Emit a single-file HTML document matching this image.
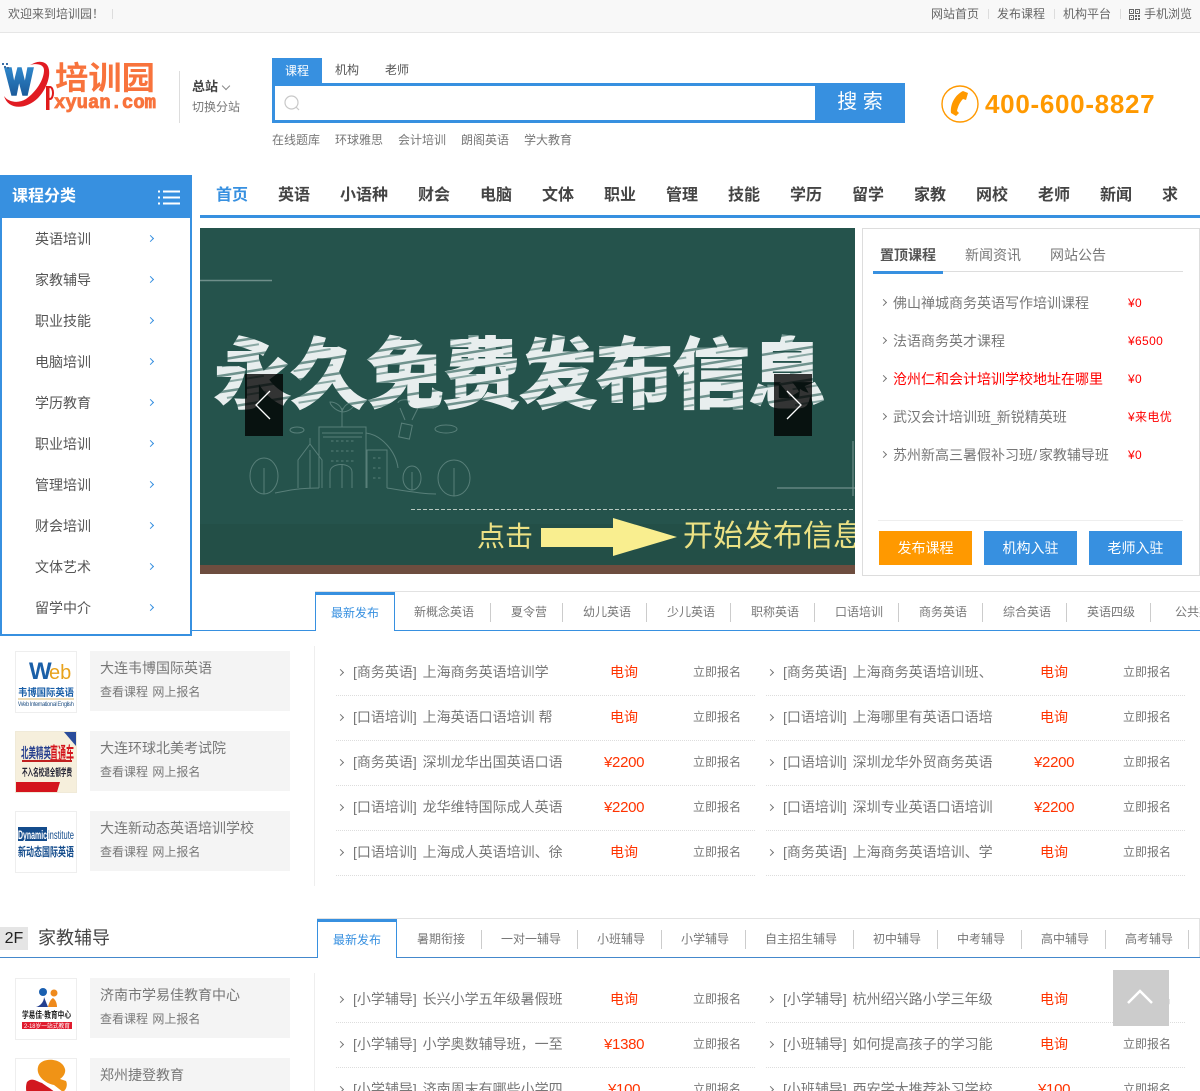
<!DOCTYPE html>
<html lang="zh"><head><meta charset="utf-8"><title>培训园</title>
<style>
*{margin:0;padding:0;box-sizing:border-box}
html,body{width:1200px;height:1091px;overflow:hidden;background:#fff}
body{position:relative;font-family:"Liberation Sans","WenQuanYi Zen Hei","Noto Sans CJK SC",sans-serif;font-size:12px;color:#777}
.a,.t,.s,.c,.b,.ch{position:absolute}
.t{white-space:nowrap;line-height:20px}
.f12{font-size:12px}.f14{font-size:14px}.f13{font-size:13px}
.s{width:1px;height:19px;background:#ccc}
.ch{width:5px;height:5px;border-top:1px solid #777;border-right:1px solid #777;transform:rotate(45deg)}
.sb{border-color:#3790e0;width:5px;height:5px}
.side{font-size:14px;color:#555;left:35px}
.nav{font-size:16px;font-weight:bold;color:#444;top:186px}
.r{font-size:14px;color:#777}
.r i{font-style:normal;margin-left:2px}
.red{color:#f30;font-size:14px}
.pr{color:#f30;font-size:15px;letter-spacing:-.3px;margin-top:1px}
.dot{position:absolute;height:1px;border-top:1px dotted #ddd}
.c{background:#f4f4f4;left:90px;width:200px;height:60px}
.b{left:15px;width:62px;height:62px;border:1px solid #eee;background:#fff;overflow:hidden}
.btn{position:absolute;top:531px;height:34px;width:93px;background:#3790e0;color:#fff;font-size:14px;line-height:34px;text-align:center}
.sp{color:#f00;font-size:12px;letter-spacing:.35px}
.w{word-spacing:1px}
.tc{font-family:"Noto Sans CJK TC",sans-serif}
</style></head><body>

<!-- top bar -->
<div class="a" style="left:0;top:0;width:1200px;height:33px;background:#f8f8f8;border-bottom:1px solid #e6e6e6"></div>
<div class="t" style="left:8px;top:4px;color:#666">欢迎来到培训园<span class="tc">！</span></div>
<div class="a" style="left:112px;top:9px;width:1px;height:10px;background:#ddd"></div>
<div class="t" style="left:931px;top:4px;color:#666">网站首页</div>
<div class="a" style="left:988px;top:9px;width:1px;height:10px;background:#ddd"></div>
<div class="t" style="left:997px;top:4px;color:#666">发布课程</div>
<div class="a" style="left:1054px;top:9px;width:1px;height:10px;background:#ddd"></div>
<div class="t" style="left:1063px;top:4px;color:#666">机构平台</div>
<div class="a" style="left:1120px;top:9px;width:1px;height:10px;background:#ddd"></div>
<svg class="a" style="left:1129px;top:9px" width="11" height="11" viewBox="0 0 11 11"><path d="M.5.5h4v4h-4zM6.500.5h4v4h-4zM.5 6.500h4v4h-4z" fill="none" stroke="#666"/><path d="M6 6h2v2H6zM9 6h2v2H9zM6 9h2v2H6zM9 9h2v2H9zM2 2h1v1H2zM8 2h1v1H8zM2 8h1v1H2z" fill="#666"/></svg>
<div class="t" style="left:1144px;top:4px;color:#666">手机浏览</div>

<!-- logo -->
<svg class="a" style="left:0;top:56px" width="170" height="60" viewBox="0 0 170 60">
<defs><linearGradient id="wg" x1="0" y1="0" x2="0" y2="1"><stop offset="0" stop-color="#2f86c9"/><stop offset="1" stop-color="#1c5c9c"/></linearGradient></defs>
<path d="M5 12L12 39H16L19 24L23 39H27L33 12H28L25 28L21 12H18L14 28L11 12Z" fill="url(#wg)" stroke="url(#wg)" stroke-width="1.500"/>
<path d="M4 40C8 54 26 54 38 42C50 30 54 8 42 6C38 5 34 7 30 9C36 7 44 8 44 14C44 24 36 36 26 43C18 48 8 46 4 40Z" fill="#e11b22"/>
<path d="M2 7h2v2H2zM6 7h2v2H6zM4 10h2v2H4zM7 11h2v2H7z" fill="#3a6ea5"/>
<text x="55" y="33" font-size="32" font-weight="bold" fill="#f8733c" font-family="'WenQuanYi Zen Hei','Noto Sans CJK SC',sans-serif" textLength="100" lengthAdjust="spacingAndGlyphs">培训园</text>
<path d="M46 30h3.500v24H46z" fill="#e01a1a"/>
<ellipse cx="50" cy="37" rx="3" ry="6" fill="none" stroke="#e01a1a" stroke-width="2"/>
<text x="54" y="52" font-size="19" font-weight="bold" fill="#f8733c" stroke="#f8733c" stroke-width=".8" font-family="'Liberation Mono',monospace" textLength="102" lengthAdjust="spacingAndGlyphs">xyuan.com</text>
</svg>
<div class="a" style="left:179px;top:71px;width:1px;height:52px;background:#ddd"></div>
<div class="t f13" style="left:192px;top:77px;color:#444;font-weight:bold">总站</div>
<div class="a" style="left:223px;top:83px;width:6px;height:6px;border-right:1px solid #888;border-bottom:1px solid #888;transform:rotate(45deg)"></div>
<div class="t" style="left:192px;top:97px;color:#777">切换分站</div>

<!-- search -->
<div class="a" style="left:272px;top:58px;width:50px;height:25px;background:#3790e0"></div>
<div class="t" style="left:285px;top:61px;color:#fff">课程</div>
<div class="t" style="left:335px;top:60px;color:#555">机构</div>
<div class="t" style="left:385px;top:60px;color:#555">老师</div>
<div class="a" style="left:272px;top:83px;width:633px;height:40px;border:3px solid #3790e0;background:#fff"></div>
<div class="a" style="left:815px;top:83px;width:90px;height:40px;background:#3790e0;color:#fff;font-size:20px;line-height:39px;text-align:center">搜 索</div>
<svg class="a" style="left:284px;top:95px" width="17" height="17" viewBox="0 0 17 17"><circle cx="7.5" cy="7.5" r="6.5" fill="none" stroke="#c8c8c8" stroke-width="1.2"/><path d="M12 12l3 3" stroke="#c8c8c8" stroke-width="1.2"/></svg>
<div class="t" style="left:272px;top:130px">在线题库</div>
<div class="t" style="left:335px;top:130px">环球雅思</div>
<div class="t" style="left:398px;top:130px">会计培训</div>
<div class="t" style="left:461px;top:130px">朗阁英语</div>
<div class="t" style="left:524px;top:130px">学大教育</div>

<!-- phone -->
<svg class="a" style="left:940px;top:84px" width="40" height="40" viewBox="0 0 40 40"><circle cx="20" cy="20" r="18" fill="none" stroke="#f90" stroke-width="1.400"/><path d="M23 7L28 9L26 16L23 15C20 18 18 22 17 27L19 29L16 32L11 29C10 20 15 11 23 7Z" fill="#f90"/></svg>
<div class="t" style="left:985px;top:89px;font-size:26px;line-height:30px;font-weight:bold;color:#f90;letter-spacing:.7px">400-600-8827</div>

<!-- nav -->
<div class="t nav" style="left:216px;color:#3790e0">首页</div>
<div class="t nav" style="left:278px">英语</div>
<div class="t nav" style="left:340px">小语种</div>
<div class="t nav" style="left:418px">财会</div>
<div class="t nav" style="left:480px">电脑</div>
<div class="t nav" style="left:542px">文体</div>
<div class="t nav" style="left:604px">职业</div>
<div class="t nav" style="left:666px">管理</div>
<div class="t nav" style="left:728px">技能</div>
<div class="t nav" style="left:790px">学历</div>
<div class="t nav" style="left:852px">留学</div>
<div class="t nav" style="left:914px">家教</div>
<div class="t nav" style="left:976px">网校</div>
<div class="t nav" style="left:1038px">老师</div>
<div class="t nav" style="left:1100px">新闻</div>
<div class="t nav" style="left:1162px">求</div>
<div class="a" style="left:200px;top:215px;width:1000px;height:3px;background:#3790e0"></div>

<!-- sidebar -->
<div class="a" style="left:0;top:175px;width:192px;height:461px;border:2px solid #3790e0;background:#fff"></div>
<div class="a" style="left:0;top:175px;width:192px;height:43px;background:#3790e0"></div>
<div class="t" style="left:12px;top:187px;font-size:16px;font-weight:bold;color:#fff">课程分类</div>
<svg class="a" style="left:158px;top:190px" width="22" height="15"><path d="M0 1.500h2M5 1.500h17M0 7.500h2M5 7.500h17M0 13.500h2M5 13.500h17" stroke="#fff" stroke-width="2"/></svg>
<div class="t side" style="top:229px">英语培训</div><div class="ch sb" style="left:148px;top:236px"></div>
<div class="t side" style="top:270px">家教辅导</div><div class="ch sb" style="left:148px;top:277px"></div>
<div class="t side" style="top:311px">职业技能</div><div class="ch sb" style="left:148px;top:318px"></div>
<div class="t side" style="top:352px">电脑培训</div><div class="ch sb" style="left:148px;top:359px"></div>
<div class="t side" style="top:393px">学历教育</div><div class="ch sb" style="left:148px;top:400px"></div>
<div class="t side" style="top:434px">职业培训</div><div class="ch sb" style="left:148px;top:441px"></div>
<div class="t side" style="top:475px">管理培训</div><div class="ch sb" style="left:148px;top:482px"></div>
<div class="t side" style="top:516px">财会培训</div><div class="ch sb" style="left:148px;top:523px"></div>
<div class="t side" style="top:557px">文体艺术</div><div class="ch sb" style="left:148px;top:564px"></div>
<div class="t side" style="top:598px">留学中介</div><div class="ch sb" style="left:148px;top:605px"></div>

<!-- banner -->
<svg class="a" style="left:200px;top:228px" width="655" height="346" viewBox="0 0 655 346">
<defs><pattern id="st" width="70" height="16" patternUnits="userSpaceOnUse" patternTransform="rotate(-9)"><rect width="70" height="16" fill="#e8eeee"/><rect y="4" width="70" height="2.500" fill="#6f928d"/><rect y="11" width="40" height="2" fill="#8aa8a4"/></pattern></defs>
<rect width="655" height="346" fill="#25534c"/>
<rect y="296" width="655" height="41" fill="#234f47"/>
<rect y="337" width="655" height="9" fill="#6d4d3f"/>
<path d="M0 52.500H72" stroke="#6f8f8a" stroke-width="1.500"/>
<path d="M577 260H657M653 213V268" stroke="#6f8f8a" stroke-width="1.200"/>
<g fill="none" stroke="#587f79" stroke-width="1">
<path d="M119 260V199H166V260M122 205H163M123 209H162"/>
<path d="M167 260V222H187V260M166 205C182 207 196 224 198 240"/>
<path d="M110 260V222M98 260V232L110 216L122 232V260M110 216V210"/>
<path d="M130 260V244C130 234 152 234 152 244V260M142 236V260"/>
<path d="M142 199V180M142 184C134 182 130 176 130 174C136 174 142 178 142 184C144 176 150 174 156 174C154 180 148 184 142 184"/>
<ellipse cx="64" cy="248" rx="14" ry="18"/><ellipse cx="254" cy="250" rx="16" ry="18"/><ellipse cx="212" cy="250" rx="9" ry="12"/>
<path d="M64 266V240M254 268V240M212 262V244M75 265C90 262 100 260 119 260M187 260C200 262 220 266 236 266"/>
<ellipse cx="97" cy="202" rx="7" ry="3"/><ellipse cx="246" cy="201" rx="11" ry="4"/>
<path d="M198 175C198 170 218 170 218 180L212 192M200 180L205 192"/><rect x="200" y="196" width="11" height="14" transform="rotate(12 205 203)"/>
</g>
<g fill="none" stroke="#587f79" stroke-width="1" stroke-dasharray="2.500 2.500">
<path d="M131 213H155M131 223H155M131 233H155M173 230H182M173 240H182M173 250H182"/>
</g>
<text x="14" y="174" font-size="77" font-weight="bold" fill="url(#st)" stroke="url(#st)" stroke-width="2" font-family="'Noto Sans CJK SC','WenQuanYi Zen Hei',sans-serif" textLength="612" lengthAdjust="spacing">永久免费发布信息</text>
<path d="M211 281.500H655" stroke="#b8c8c0" stroke-dasharray="4 2"/>
<text x="277" y="318" font-size="28" fill="#ece184" font-family="'WenQuanYi Zen Hei','Noto Sans CJK SC',sans-serif">点击</text>
<path d="M341 300H413V290L477 309L413 328V319H341Z" fill="#f9ee8f"/>
<text x="483" y="318" font-size="30" fill="#ece184" font-family="'WenQuanYi Zen Hei','Noto Sans CJK SC',sans-serif">开始发布信息</text>
<rect x="45" y="146" width="38" height="62" fill="#000" opacity=".78"/>
<rect x="574" y="146" width="38" height="62" fill="#000" opacity=".78"/>
<path d="M70 163L56 177L70 191M587 163L601 177L587 191" fill="none" stroke="#fff" stroke-width="1.300"/>
</svg>

<!-- right panel -->
<div class="a" style="left:862px;top:228px;width:338px;height:348px;border:1px solid #ddd;background:#fff"></div>
<div class="t f14" style="left:880px;top:245px;color:#555;font-weight:bold">置顶课程</div>
<div class="t f14" style="left:965px;top:245px;color:#777">新闻资讯</div>
<div class="t f14" style="left:1050px;top:245px;color:#777">网站公告</div>
<div class="a" style="left:873px;top:271px;width:310px;height:1px;background:#ddd"></div>
<div class="a" style="left:873px;top:271px;width:70px;height:3px;background:#3790e0"></div>
<div class="ch" style="left:881px;top:300px"></div><div class="t r" style="left:893px;top:293px">佛山禅城商务英语写作培训课程</div><div class="t sp" style="left:1128px;top:293px">¥0</div>
<div class="ch" style="left:881px;top:338px"></div><div class="t r" style="left:893px;top:331px">法语商务英才课程</div><div class="t sp" style="left:1128px;top:331px">¥6500</div>
<div class="ch" style="left:881px;top:376px"></div><div class="t r" style="left:893px;top:369px;color:#f00">沧州仁和会计培训学校地址在哪里</div><div class="t sp" style="left:1128px;top:369px">¥0</div>
<div class="ch" style="left:881px;top:414px"></div><div class="t r" style="left:893px;top:407px">武汉会计培训班<span style="letter-spacing:-2px">_</span>新锐精英班</div><div class="t sp" style="left:1128px;top:407px">¥来电优</div>
<div class="ch" style="left:881px;top:452px"></div><div class="t r" style="left:893px;top:445px">苏州新高三暑假补习班/<i></i>家教辅导班</div><div class="t sp" style="left:1128px;top:445px">¥0</div>
<div class="a" style="left:878px;top:520px;width:305px;height:1px;background:#eee"></div>
<div class="btn" style="left:879px;background:#f90">发布课程</div>
<div class="btn" style="left:984px">机构入驻</div>
<div class="btn" style="left:1089px">老师入驻</div>

<!-- floor 1 tabs -->
<div class="a" style="left:315px;top:591px;width:885px;height:1px;background:#e2e2e2"></div>
<div class="a" style="left:192px;top:630px;width:1008px;height:1px;background:#3790e0"></div>
<div class="a" style="left:315px;top:592px;width:80px;height:39px;border:1px solid #3790e0;border-top:3px solid #3790e0;border-bottom:0;background:#fff"></div>
<div class="t" style="left:331px;top:603px;color:#3790e0">最新发布</div>
<div class="t" style="left:414px;top:602px">新概念英语</div><div class="s" style="left:490px;top:603px"></div>
<div class="t" style="left:511px;top:602px">夏令营</div><div class="s" style="left:562px;top:603px"></div>
<div class="t" style="left:583px;top:602px">幼儿英语</div><div class="s" style="left:646px;top:603px"></div>
<div class="t" style="left:667px;top:602px">少儿英语</div><div class="s" style="left:730px;top:603px"></div>
<div class="t" style="left:751px;top:602px">职称英语</div><div class="s" style="left:814px;top:603px"></div>
<div class="t" style="left:835px;top:602px">口语培训</div><div class="s" style="left:898px;top:603px"></div>
<div class="t" style="left:919px;top:602px">商务英语</div><div class="s" style="left:982px;top:603px"></div>
<div class="t" style="left:1003px;top:602px">综合英语</div><div class="s" style="left:1066px;top:603px"></div>
<div class="t" style="left:1087px;top:602px">英语四级</div><div class="s" style="left:1150px;top:603px"></div>
<div class="t" style="left:1175px;top:602px">公共英语</div>

<!-- floor 1 left -->
<div class="b" style="top:651px"><svg width="60" height="60" viewBox="0 0 60 60"><text x="13" y="27" font-size="24" font-weight="bold" fill="#1a5fa8" font-family="'Liberation Sans',sans-serif">W</text><text x="33" y="27" font-size="20" fill="#e8a21c" font-family="'Liberation Sans',sans-serif">eb</text><text x="2" y="44" font-size="10" font-weight="bold" fill="#1a5fa8" textLength="56" lengthAdjust="spacingAndGlyphs">韦博国际英语</text><path d="M2 47h56" stroke="#d9b870"/><text x="2" y="54" font-size="6" fill="#35608f" textLength="56">Web International English</text></svg></div>
<div class="c" style="top:651px"></div>
<div class="t f14" style="left:100px;top:658px">大连韦博国际英语</div>
<div class="t w" style="left:100px;top:682px">查看课程 网上报名</div>

<div class="b" style="top:731px;border-color:#f0ead8"><svg width="60" height="60" viewBox="0 0 60 60"><rect width="60" height="60" fill="#f6efdc"/><path d="M48 0h12v14z" fill="#2a4c9a"/><path d="M0 50h44l-3 10H0z" fill="#d4141c"/><text x="5" y="26" font-size="14" font-weight="bold" fill="#263f8e" textLength="30" lengthAdjust="spacingAndGlyphs">北美精英</text><text x="34" y="28" font-size="18" font-weight="bold" fill="#d4141c" textLength="24" lengthAdjust="spacingAndGlyphs">直通车</text><path d="M6 29h50" stroke="#c02020" stroke-width="2"/><text x="6" y="44" font-size="10" font-weight="bold" fill="#223" textLength="50" lengthAdjust="spacingAndGlyphs">不入名校退全额学费</text></svg></div>
<div class="c" style="top:731px"></div>
<div class="t f14" style="left:100px;top:738px">大连环球北美考试院</div>
<div class="t w" style="left:100px;top:762px">查看课程 网上报名</div>

<div class="b" style="top:811px"><svg width="60" height="60" viewBox="0 0 60 60"><rect x="2" y="15" width="29" height="14" fill="#144c8c"/><text x="2" y="27" font-size="12" font-weight="bold" fill="#fff" font-family="'Liberation Sans',sans-serif" textLength="29" lengthAdjust="spacingAndGlyphs">Dynamic</text><text x="32" y="27" font-size="12" fill="#144c8c" textLength="26" lengthAdjust="spacingAndGlyphs">institute</text><text x="2" y="44" font-size="12" font-weight="bold" fill="#144c8c" textLength="56" lengthAdjust="spacingAndGlyphs">新动态国际英语</text></svg></div>
<div class="c" style="top:811px"></div>
<div class="t f14" style="left:100px;top:818px">大连新动态英语培训学校</div>
<div class="t w" style="left:100px;top:842px">查看课程 网上报名</div>

<div class="a" style="left:314px;top:646px;width:1px;height:240px;background:#eee"></div>

<!-- floor 1 list col1 -->
<div class="ch" style="left:338px;top:670px"></div><div class="t r" style="left:353px;top:662px">[商务英语] <i></i>上海商务英语培训学</div><div class="t red" style="left:610px;top:662px">电询</div><div class="t" style="left:693px;top:662px">立即报名</div><div class="dot" style="left:336px;top:695px;width:419px"></div>
<div class="ch" style="left:338px;top:715px"></div><div class="t r" style="left:353px;top:707px">[口语培训] <i></i>上海英语口语培训 帮</div><div class="t red" style="left:610px;top:707px">电询</div><div class="t" style="left:693px;top:707px">立即报名</div><div class="dot" style="left:336px;top:740px;width:419px"></div>
<div class="ch" style="left:338px;top:760px"></div><div class="t r" style="left:353px;top:752px">[商务英语] <i></i>深圳龙华出国英语口语</div><div class="t pr" style="left:604px;top:752px">¥2200</div><div class="t" style="left:693px;top:752px">立即报名</div><div class="dot" style="left:336px;top:785px;width:419px"></div>
<div class="ch" style="left:338px;top:805px"></div><div class="t r" style="left:353px;top:797px">[口语培训] <i></i>龙华维特国际成人英语</div><div class="t pr" style="left:604px;top:797px">¥2200</div><div class="t" style="left:693px;top:797px">立即报名</div><div class="dot" style="left:336px;top:830px;width:419px"></div>
<div class="ch" style="left:338px;top:850px"></div><div class="t r" style="left:353px;top:842px">[口语培训] <i></i>上海成人英语培训、徐</div><div class="t red" style="left:610px;top:842px">电询</div><div class="t" style="left:693px;top:842px">立即报名</div><div class="dot" style="left:336px;top:875px;width:419px"></div>
<!-- col2 -->
<div class="ch" style="left:768px;top:670px"></div><div class="t r" style="left:783px;top:662px">[商务英语] <i></i>上海商务英语培训班、</div><div class="t red" style="left:1040px;top:662px">电询</div><div class="t" style="left:1123px;top:662px">立即报名</div><div class="dot" style="left:766px;top:695px;width:419px"></div>
<div class="ch" style="left:768px;top:715px"></div><div class="t r" style="left:783px;top:707px">[口语培训] <i></i>上海哪里有英语口语培</div><div class="t red" style="left:1040px;top:707px">电询</div><div class="t" style="left:1123px;top:707px">立即报名</div><div class="dot" style="left:766px;top:740px;width:419px"></div>
<div class="ch" style="left:768px;top:760px"></div><div class="t r" style="left:783px;top:752px">[口语培训] <i></i>深圳龙华外贸商务英语</div><div class="t pr" style="left:1034px;top:752px">¥2200</div><div class="t" style="left:1123px;top:752px">立即报名</div><div class="dot" style="left:766px;top:785px;width:419px"></div>
<div class="ch" style="left:768px;top:805px"></div><div class="t r" style="left:783px;top:797px">[口语培训] <i></i>深圳专业英语口语培训</div><div class="t pr" style="left:1034px;top:797px">¥2200</div><div class="t" style="left:1123px;top:797px">立即报名</div><div class="dot" style="left:766px;top:830px;width:419px"></div>
<div class="ch" style="left:768px;top:850px"></div><div class="t r" style="left:783px;top:842px">[商务英语] <i></i>上海商务英语培训、学</div><div class="t red" style="left:1040px;top:842px">电询</div><div class="t" style="left:1123px;top:842px">立即报名</div><div class="dot" style="left:766px;top:875px;width:419px"></div>

<!-- floor 2 header -->
<div class="a" style="left:0;top:927px;width:28px;height:23px;background:#e5e5e5;color:#222;font-size:16px;line-height:23px;text-align:center">2F</div>
<div class="t" style="left:38px;top:928px;font-size:18px;color:#444">家教辅导</div>
<div class="a" style="left:317px;top:918px;width:883px;height:40px;border-top:1px solid #e2e2e2;border-right:1px solid #e2e2e2"></div>
<div class="a" style="left:0;top:957px;width:1200px;height:1px;background:#4488cc"></div>
<div class="a" style="left:317px;top:919px;width:80px;height:39px;border:1px solid #3790e0;border-top:3px solid #3790e0;border-bottom:0;background:#fff"></div>
<div class="t" style="left:333px;top:930px;color:#3790e0">最新发布</div>
<div class="t" style="left:417px;top:929px">暑期衔接</div><div class="s" style="left:481px;top:930px"></div>
<div class="t" style="left:501px;top:929px">一对一辅导</div><div class="s" style="left:577px;top:930px"></div>
<div class="t" style="left:597px;top:929px">小班辅导</div><div class="s" style="left:661px;top:930px"></div>
<div class="t" style="left:681px;top:929px">小学辅导</div><div class="s" style="left:745px;top:930px"></div>
<div class="t" style="left:765px;top:929px">自主招生辅导</div><div class="s" style="left:853px;top:930px"></div>
<div class="t" style="left:873px;top:929px">初中辅导</div><div class="s" style="left:937px;top:930px"></div>
<div class="t" style="left:957px;top:929px">中考辅导</div><div class="s" style="left:1021px;top:930px"></div>
<div class="t" style="left:1041px;top:929px">高中辅导</div><div class="s" style="left:1105px;top:930px"></div>
<div class="t" style="left:1125px;top:929px">高考辅导</div><div class="s" style="left:1188px;top:930px"></div>

<!-- floor 2 left -->
<div class="b" style="top:978px"><svg width="60" height="60" viewBox="0 0 60 60"><circle cx="27" cy="13" r="4" fill="#1a5fb0"/><circle cx="38" cy="14" r="3.500" fill="#ef8a1c"/><path d="M20 28c4-1 8-5 8-10l4 10z" fill="#25408f"/><path d="M32 28c1-5 3-8 5-9c3 2 4 6 4 9z" fill="#ef8a1c"/><text x="6" y="39" font-size="9" font-weight="bold" fill="#222" textLength="49" lengthAdjust="spacingAndGlyphs">学易佳·教育中心</text><rect x="6" y="43" width="50" height="7" fill="#e01b2e"/><text x="8" y="49" font-size="6" fill="#fff" textLength="46" lengthAdjust="spacingAndGlyphs">2-18岁一站式教育</text></svg></div>
<div class="c" style="top:978px"></div>
<div class="t f14" style="left:100px;top:985px">济南市学易佳教育中心</div>
<div class="t w" style="left:100px;top:1009px">查看课程 网上报名</div>

<div class="b" style="top:1058px"><svg width="60" height="60" viewBox="0 0 60 60"><path d="M22 8C24-2 46-2 49 10C50 14 47 18 44 20L50 22C52 26 50 31 47 33L38 26C28 24 20 16 22 8Z" fill="#f09316"/><path d="M11 23C16 18 20 22 26 24C34 30 44 34 44 44V60H18C18 48 24 42 15 40C10 38 9 28 11 23Z" fill="#d2181f"/></svg></div>
<div class="c" style="top:1058px;height:33px"></div>
<div class="t f14" style="left:100px;top:1065px">郑州捷登教育</div>
<div class="a" style="left:314px;top:973px;width:1px;height:118px;background:#eee"></div>

<!-- floor 2 list -->
<div class="ch" style="left:338px;top:997px"></div><div class="t r" style="left:353px;top:989px">[小学辅导] <i></i>长兴小学五年级暑假班</div><div class="t red" style="left:610px;top:989px">电询</div><div class="t" style="left:693px;top:989px">立即报名</div><div class="dot" style="left:336px;top:1022px;width:419px"></div>
<div class="ch" style="left:338px;top:1042px"></div><div class="t r" style="left:353px;top:1034px">[小学辅导] <i></i>小学奥数辅导班<span class="tc">，</span>一至</div><div class="t pr" style="left:604px;top:1034px">¥1380</div><div class="t" style="left:693px;top:1034px">立即报名</div><div class="dot" style="left:336px;top:1067px;width:419px"></div>
<div class="ch" style="left:338px;top:1087px"></div><div class="t r" style="left:353px;top:1079px">[小学辅导] <i></i>济南周末有哪些小学四</div><div class="t pr" style="left:608px;top:1079px">¥100</div><div class="t" style="left:693px;top:1079px">立即报名</div>
<div class="ch" style="left:768px;top:997px"></div><div class="t r" style="left:783px;top:989px">[小学辅导] <i></i>杭州绍兴路小学三年级</div><div class="t red" style="left:1040px;top:989px">电询</div><div class="t" style="left:1123px;top:989px">立即报名</div><div class="dot" style="left:766px;top:1022px;width:419px"></div>
<div class="ch" style="left:768px;top:1042px"></div><div class="t r" style="left:783px;top:1034px">[小班辅导] <i></i>如何提高孩子的学习能</div><div class="t red" style="left:1040px;top:1034px">电询</div><div class="t" style="left:1123px;top:1034px">立即报名</div><div class="dot" style="left:766px;top:1067px;width:419px"></div>
<div class="ch" style="left:768px;top:1087px"></div><div class="t r" style="left:783px;top:1079px">[小班辅导] <i></i>西安学大推荐补习学校</div><div class="t pr" style="left:1038px;top:1079px">¥100</div><div class="t" style="left:1123px;top:1079px">立即报名</div>

<!-- back to top -->
<div class="a" style="left:1113px;top:970px;width:56px;height:56px;background:#ccc"></div>
<svg class="a" style="left:1127px;top:988px" width="26" height="16"><path d="M1 15L13 3L25 15" fill="none" stroke="#fff" stroke-width="2.500"/></svg>
</body></html>
